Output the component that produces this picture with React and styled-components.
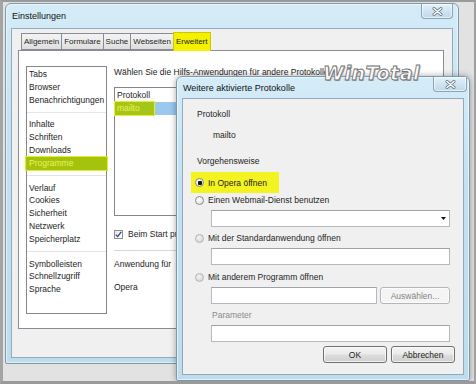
import React from 'react'
import styled, { createGlobalStyle } from 'styled-components'

const GlobalStyle = createGlobalStyle`
  html, body { margin: 0; padding: 0; background: #e4e4e4; }
  * { box-sizing: border-box; }
`

const Screen = styled.div`
  position: relative;
  width: 476px;
  height: 384px;
  overflow: hidden;
  background: #e2e2e2;
  border-top: 2px solid #9a9a9a;
  border-left: 3px solid #a4a4a4;
  border-right: 2px solid #a0a0a0;
  border-bottom: 3px solid #9a9a9a;
  padding: 1px 0 0 2px;
  font-family: "Liberation Sans", Arial, sans-serif;
  font-size: 8.5px;
  color: #1e1e1e;
`

const Window = styled.div`
  width: ${p => p.$w}px;
  height: ${p => p.$h}px;
  display: flex;
  flex-direction: column;
  background: linear-gradient(180deg, #d5ecf8 0%, #c3e1f2 35%, #bddcee 100%);
  border: 1px solid #7d98ab;
  border-radius: 6px 6px 2px 2px;
  padding: 0 5px 5px 5px;
  box-shadow: inset 0 0 0 1px rgba(255,255,255,0.55);
`

const Dialog = styled(Window)`
  position: absolute;
  left: 173px;
  top: 74px;
  box-shadow: inset 0 0 0 1px rgba(255,255,255,0.55), 0 0 6px rgba(0,0,0,0.35);
`

const TitleBar = styled.div`
  height: ${p => p.$h}px;
  flex: none;
  display: flex;
  justify-content: space-between;
  align-items: flex-start;
`

const Title = styled.span`
  margin-top: ${p => p.$top}px;
  margin-left: 1px;
  font-size: 9px;
  line-height: 10px;
  color: #111;
`

const CloseButton = styled.div`
  width: ${p => p.$w}px;
  height: 15px;
  margin-right: ${p => p.$mr}px;
  border: 1px solid #8aa3b5;
  border-top: none;
  border-radius: 0 0 4px 4px;
  background: linear-gradient(180deg, #e6f2f9 0%, #cfe4f1 50%, #bed9ea 100%);
  box-shadow: inset 0 0 0 1px rgba(255,255,255,0.6);
  display: flex;
  align-items: center;
  justify-content: center;
`

const Client = styled.div`
  flex: 1;
  background: #f0f0f0;
  border: 1px solid #94a9ba;
  display: flex;
  flex-direction: column;
  padding: ${p => p.$pad};
`

const TabRow = styled.div`
  display: flex;
  align-items: flex-end;
  height: 18px;
  padding-left: 3px;
  position: relative;
  z-index: 1;
`

const Tab = styled.div`
  height: ${p => (p.$active ? 19 : 17)}px;
  margin-bottom: ${p => (p.$active ? -1 : 0)}px;
  margin-right: -1px;
  padding: 0 2px;
  border: 1px solid ${p => (p.$active ? '#cfc800' : '#898c95')};
  border-bottom: ${p => (p.$active ? 'none' : '1px solid #898c95')};
  background: ${p => (p.$active ? '#f3f000' : 'linear-gradient(180deg, #f3f3f3 0%, #ebebeb 50%, #dddddd 100%)')};
  display: flex;
  align-items: center;
  font-size: 8px;
  line-height: 10px;
`

const Panel = styled.div`
  height: 279px;
  background: #fff;
  border: 1px solid #898c95;
  display: flex;
  gap: 7px;
  padding: 15px 8px 15px 7px;
`

const ListBox = styled.div`
  width: 81px;
  height: 248px;
  flex: none;
  border: 1px solid #828790;
  padding-top: 1px;
`

const ListItem = styled.div`
  height: 12.8px;
  line-height: 12.8px;
  padding-left: 2px;
  white-space: nowrap;
  ${p => p.$hl && `
    margin: 0 -1px 0 -1px;
    padding-left: 3px;
    background: #a3c30f;
    color: #eef25c;
    box-shadow: 0 0 0 1px #e6ee2c;
  `}
`

const ListSep = styled.div`
  height: 12px;
  display: flex;
  align-items: center;
  &::after {
    content: '';
    flex: 1;
    border-top: 1px solid #e4e4e4;
  }
`

const Content = styled.div`
  flex: 1;
  display: flex;
  flex-direction: column;
  min-width: 0;
`

const Line = styled.div`
  height: 12px;
  line-height: 12px;
  white-space: nowrap;
  margin-top: ${p => p.$mt || 0}px;
  padding-left: ${p => p.$pl || 0}px;
  color: ${p => (p.$muted ? '#8a8a8a' : 'inherit')};
`

const Table = styled.div`
  margin-top: 9px;
  height: 129px;
  border: 1px solid #828790;
  padding-top: 1px;
`

const TableRow = styled.div`
  height: 13px;
  line-height: 13px;
  padding-left: 2px;
  display: flex;
  background: ${p => (p.$selected ? '#9ac8ee' : 'transparent')};
`

const MarkedCell = styled.span`
  width: 39px;
  margin-left: -2px;
  padding-left: 2px;
  background: #a6c51a;
  color: #eef154;
  box-shadow: 0 0 0 1px #e8ef26;
`

const CheckRow = styled.div`
  margin-top: 12px;
  height: 12px;
  display: flex;
  align-items: center;
  gap: 5px;
  white-space: nowrap;
`

const CheckBox = styled.span`
  width: 9px;
  height: 9px;
  flex: none;
  border: 1px solid #8e8f8f;
  background: linear-gradient(135deg, #e6e6e6, #fff);
  display: flex;
  align-items: center;
  justify-content: center;
`

const Separator = styled.div`
  margin-top: 10px;
  border-top: 1px solid #d7d7d7;
`

const DialogBody = styled.div`
  display: flex;
  flex-direction: column;
  padding: 9px 0 0 14px;
`

const OptionRow = styled.div`
  display: flex;
  align-items: center;
  gap: 4px;
  height: ${p => (p.$hl ? 21 : 12)}px;
  margin-top: ${p => p.$mt}px;
  margin-left: ${p => (p.$hl ? -6 : -2)}px;
  padding-left: ${p => (p.$hl ? 4 : 0)}px;
  width: ${p => (p.$hl ? '88px' : 'auto')};
  background: ${p => (p.$hl ? '#f4f322' : 'transparent')};
  white-space: nowrap;
`

const Radio = styled.span`
  width: 9px;
  height: 9px;
  flex: none;
  border-radius: 50%;
  border: 1px solid ${p => (p.$dim ? '#b4b4b4' : '#8a8a8a')};
  background: ${p => (p.$dim ? 'radial-gradient(circle at 40% 35%, #f4f4f4, #cfcfcf)' : 'radial-gradient(circle at 40% 35%, #ffffff, #dcdcdc)')};
  display: flex;
  align-items: center;
  justify-content: center;
  &::after {
    content: '';
    width: 4px;
    height: 4px;
    border-radius: 1px;
    background: ${p => (p.$checked ? '#151515' : 'transparent')};
  }
`

const FieldRow = styled.div`
  display: flex;
  gap: 3px;
  margin-top: 4px;
  margin-left: 14px;
  width: 239px;
`

const Field = styled.div`
  flex: 1;
  height: 17px;
  background: #fff;
  border: 1px solid #b5b8be;
  border-top-color: #a0a3aa;
  display: flex;
  align-items: center;
  justify-content: flex-end;
  padding-right: 3px;
`

const Button = styled.div`
  width: ${p => p.$w}px;
  height: 17px;
  flex: none;
  border: 1px solid ${p => (p.$disabled ? '#b3b6b9' : '#707070')};
  border-radius: 3px;
  background: ${p => (p.$disabled ? '#f4f4f4' : 'linear-gradient(180deg, #f3f3f3 0%, #ebebeb 48%, #dddddd 52%, #cfcfcf 100%)')};
  box-shadow: inset 0 0 0 1px rgba(255,255,255,0.7);
  color: ${p => (p.$disabled ? '#858585' : '#1e1e1e')};
  display: flex;
  align-items: center;
  justify-content: center;
  font-size: 8.5px;
`

const ButtonBar = styled.div`
  display: flex;
  justify-content: flex-end;
  gap: 4px;
  margin-top: 4px;
  margin-right: 8px;
`

const Watermark = styled.div`
  position: absolute;
  left: 320px;
  top: 60px;
  font-family: "DejaVu Sans", "Liberation Sans", sans-serif;
  font-style: italic;
  font-weight: bold;
  font-size: 19px;
  letter-spacing: 0.5px;
  color: #fafafa;
  -webkit-text-stroke: 0.8px #6e6e6e;
  text-shadow: 1px 1px 0 #a8a8a8;
  z-index: 3;
  pointer-events: none;
`

const CloseIcon = () => (
  <svg width="11" height="9" viewBox="0 0 11 9">
    <path d="M2 1.5 L9 7.5 M9 1.5 L2 7.5" stroke="#6f7f8c" strokeWidth="3" strokeLinecap="round" />
    <path d="M2 1.5 L9 7.5 M9 1.5 L2 7.5" stroke="#fff" strokeWidth="1.4" strokeLinecap="round" />
  </svg>
)

const CheckIcon = () => (
  <svg width="7" height="7" viewBox="0 0 7 7">
    <path d="M0.8 3.6 L2.7 5.6 L6.2 0.8" fill="none" stroke="#2b3f8c" strokeWidth="1.3" />
  </svg>
)

const Arrow = () => (
  <svg width="5" height="3" viewBox="0 0 5 3">
    <path d="M0 0 H5 L2.5 3 Z" fill="#111" />
  </svg>
)

const tabs = ['Allgemein', 'Formulare', 'Suche', 'Webseiten', 'Erweitert']

const groups = [
  ['Tabs', 'Browser', 'Benachrichtigungen'],
  ['Inhalte', 'Schriften', 'Downloads', 'Programme'],
  ['Verlauf', 'Cookies', 'Sicherheit', 'Netzwerk', 'Speicherplatz'],
  ['Symbolleisten', 'Schnellzugriff', 'Sprache'],
]

export default function App() {
  return (
    <Screen>
      <GlobalStyle />
      <Window $w={454} $h={361}>
        <TitleBar $h={24}>
          <Title $top={7}>Einstellungen</Title>
          <CloseButton $w={32} $mr={0}><CloseIcon /></CloseButton>
        </TitleBar>
        <Client $pad="3px 8px 0 6px">
          <TabRow>
            {tabs.map(t => (
              <Tab key={t} $active={t === 'Erweitert'}>{t}</Tab>
            ))}
          </TabRow>
          <Panel>
            <ListBox>
              {groups.map((g, i) => (
                <React.Fragment key={i}>
                  {i > 0 && <ListSep />}
                  {g.map(item => (
                    <ListItem key={item} $hl={item === 'Programme'}>{item}</ListItem>
                  ))}
                </React.Fragment>
              ))}
            </ListBox>
            <Content>
              <Line>Wählen Sie die Hilfs-Anwendungen für andere Protokolle</Line>
              <Table>
                <TableRow>Protokoll</TableRow>
                <TableRow $selected><MarkedCell>mailto</MarkedCell></TableRow>
              </Table>
              <CheckRow>
                <CheckBox><CheckIcon /></CheckBox>
                Beim Start pr
              </CheckRow>
              <Separator />
              <Line $mt={7}>Anwendung für</Line>
              <Line $mt={11}>Opera</Line>
            </Content>
          </Panel>
        </Client>
      </Window>

      <Watermark>WinTotal</Watermark>

      <Dialog $w={294} $h={305}>
        <TitleBar $h={21}>
          <Title $top={6}>Weitere aktivierte Protokolle</Title>
          <CloseButton $w={34} $mr={-3}><CloseIcon /></CloseButton>
        </TitleBar>
        <Client $pad="0">
          <DialogBody>
            <Line>Protokoll</Line>
            <Line $mt={9} $pl={16}>mailto</Line>
            <Line $mt={14}>Vorgehensweise</Line>
            <OptionRow $hl $mt={5}><Radio $checked />In Opera öffnen</OptionRow>
            <OptionRow $mt={1}><Radio />Einen Webmail-Dienst benutzen</OptionRow>
            <FieldRow><Field><Arrow /></Field></FieldRow>
            <OptionRow $mt={5}><Radio $dim />Mit der Standardanwendung öffnen</OptionRow>
            <FieldRow><Field /></FieldRow>
            <OptionRow $mt={6}><Radio $dim />Mit anderem Programm öffnen</OptionRow>
            <FieldRow>
              <Field />
              <Button $w={70} $disabled>Auswählen...</Button>
            </FieldRow>
            <Line $mt={5} $pl={15} $muted>Parameter</Line>
            <FieldRow><Field /></FieldRow>
            <ButtonBar>
              <Button $w={64}>OK</Button>
              <Button $w={64}>Abbrechen</Button>
            </ButtonBar>
          </DialogBody>
        </Client>
      </Dialog>
    </Screen>
  )
}
